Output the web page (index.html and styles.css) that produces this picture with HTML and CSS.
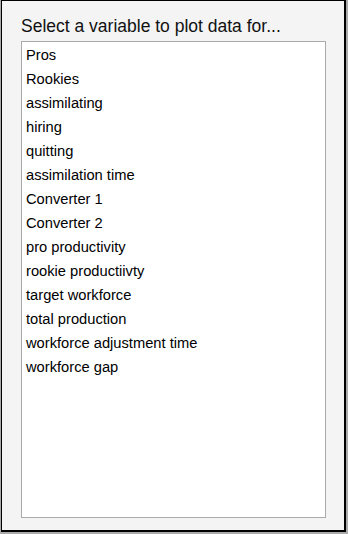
FILE: index.html
```html
<!DOCTYPE html>
<html>
<head>
<meta charset="utf-8">
<link rel="stylesheet" href="styles.css">
</head>
<body>
<div class="panel">
  <div class="title">Select a variable to plot data for...</div>
  <ul class="list">
    <li>Pros</li>
    <li>Rookies</li>
    <li>assimilating</li>
    <li>hiring</li>
    <li>quitting</li>
    <li>assimilation time</li>
    <li>Converter 1</li>
    <li>Converter 2</li>
    <li>pro productivity</li>
    <li>rookie productiivty</li>
    <li>target workforce</li>
    <li>total production</li>
    <li>workforce adjustment time</li>
    <li>workforce gap</li>
  </ul>
</div>
</body>
</html>
```
FILE: styles.css
```css
html, body {
  margin: 0;
  padding: 0;
}
body {
  background: #ababab;
  width: 348px;
  height: 534px;
  overflow: hidden;
  font-family: "Liberation Sans", Arial, sans-serif;
  color: #000;
}
.panel {
  box-sizing: border-box;
  margin-left: 1px;
  width: 345px;
  height: 532px;
  background: #f4f4f4;
  border: 1px solid #000;
  border-right-width: 2px;
  border-bottom-width: 2px;
  padding: 15px 0 0 19px;
}
.title {
  font-size: 17.5px;
  line-height: 21px;
  height: 25px;
  color: #111;
}
.list {
  box-sizing: border-box;
  list-style: none;
  margin: 0;
  width: 305px;
  height: 477px;
  background: #fff;
  border: 1px solid #aaa;
  padding: 1px 0 0 4px;
}
.list li {
  font-size: 14.7px;
  line-height: 24px;
  height: 24px;
}
```
